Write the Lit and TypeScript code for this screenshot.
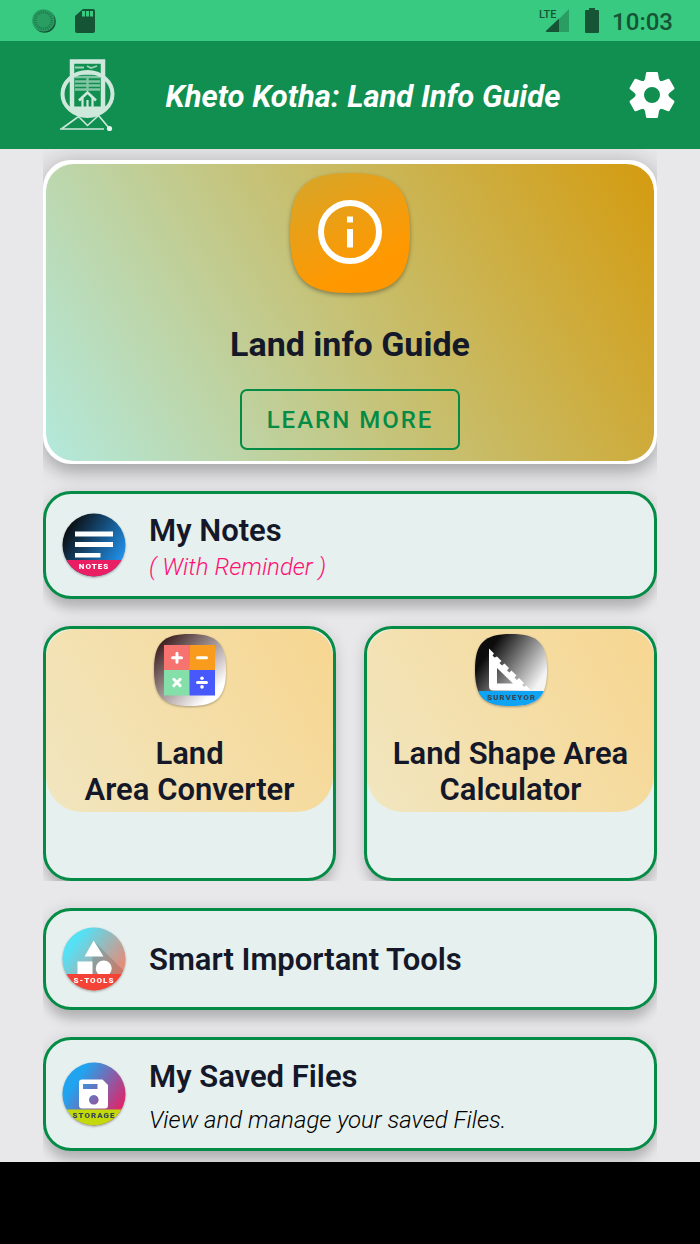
import { LitElement, html, css, svg } from "lit";
import { customElement } from "lit/decorators.js";

const SQUIRCLE = "M60 0C105 0 120 15 120 60S105 120 60 120 0 105 0 60 15 0 60 0Z";

const teeth = Array.from({ length: 24 }, (_, i) => i * 15);
const cogs = [0, 60, 120, 180, 240, 300];

const coinIcon = html`<svg class="coin" viewBox="0 0 24 24" aria-hidden="true">
  <circle cx="12.6" cy="12.6" r="11.2" fill="#165436" />
  <circle cx="11.4" cy="11.4" r="11.2" fill="#2a9d63" />
  ${teeth.map(
    (a) => svg`<path d="M11.4 1.4v3" stroke="#1b7c4b" stroke-width="1" transform="rotate(${a} 11.4 11.4)" />`
  )}
</svg>`;

const sdIcon = html`<svg class="sd" viewBox="0 0 20 24" aria-hidden="true">
  <path d="M8 0h10q2 0 2 2v20q0 2-2 2H2q-2 0-2-2V7Z" fill="#165436" />
  <path d="M7 2h3v5.500H7zM11 2h3v5.500h-3zM15 2h3v5.500h-3z" fill="#37ca80" />
</svg>`;

const signalIcon = html`<svg class="signal" viewBox="0 0 31 25" role="img" aria-label="LTE signal">
  <path d="M30 1v23H20V11Z" fill="#2a9d63" />
  <path d="M20 10.500V24H8q-2 0-.6-1.400Z" fill="#165436" />
  <text x="0" y="10" class="lte">LTE</text>
</svg>`;

const batteryIcon = html`<svg class="battery" viewBox="0 0 14 25" role="img" aria-label="Battery">
  <path d="M4 0h6v2h3q1 0 1 1v21q0 1-1 1H1q-1 0-1-1V3q0-1 1-1h3Z" fill="#165436" />
</svg>`;

const logoIcon = html`<svg class="logo" viewBox="0 0 60 76" aria-hidden="true">
  <g fill="none" stroke="#cfe8dc">
    <ellipse cx="29.500" cy="37" rx="25" ry="22" stroke-width="4" />
    <path d="M14 50V4.500h31V50" stroke-width="4.500" />
    <path d="M17 10.500h9M29 9l4 2 6-2M17 17h25" stroke-width="1.800" opacity=".75" />
    <path d="M17 20h25M17 24.500h25M17 28.500h25M17 32.500h25M29.500 20v14" stroke-width="2.400" opacity=".6" />
    <path d="M21 43.500l8.500-8 8.500 8" stroke-width="2.600" />
    <path d="M24.500 41v9M34.500 41v9M29.500 43v7" stroke-width="2.200" />
    <path d="M4 71.500 20.500 59.500 29.500 68.500 40.500 58.500 51 71" stroke-width="1.600" />
    <path d="M2 72h44" stroke-width="1.600" />
  </g>
  <path d="M11 49.500h37q-8 10-18.500 10T11 49.500Z" fill="#cfe8dc" />
  <circle cx="51.500" cy="71.500" r="2.600" fill="#e4f4ec" />
</svg>`;

const gearIcon = html`<svg class="gear" viewBox="-28 -28 56 56" aria-hidden="true">
  <circle r="12" fill="none" stroke="#fff" stroke-width="8" />
  ${cogs.map(
    (a) => svg`<path fill="#fff" transform="rotate(${a})"
      d="M-8.500-13.500-7-16-6-22Q-5.800-23-4.800-23H4.800Q5.800-23 6-22L7-16 8.500-13.500 5-11H-5Z" />`
  )}
</svg>`;

const infoIcon = html`<svg class="info" viewBox="0 0 120 120" aria-hidden="true">
  <defs>
    <linearGradient id="info-bg" x1="0.2" y1="0" x2="0.7" y2="1">
      <stop offset="0" stop-color="#d9a527" />
      <stop offset=".8" stop-color="#ff9800" />
    </linearGradient>
  </defs>
  <path d=${SQUIRCLE} fill="url(#info-bg)" />
  <circle cx="60" cy="59" r="29" fill="none" stroke="#fff" stroke-width="6" />
  <path d="M57 43.500h6v6h-6zM57 56h6v18.500h-6z" fill="#fff" />
</svg>`;

const converterIcon = html`<svg class="tile-icon" viewBox="0 0 72 72" aria-hidden="true">
  <defs>
    <linearGradient id="conv-bg" x1="0.1" y1="0.1" x2="0.9" y2="0.9">
      <stop offset="0" stop-color="#3c1d1e" />
      <stop offset=".9" stop-color="#ffffff" />
    </linearGradient>
  </defs>
  <path d=${SQUIRCLE} transform="scale(.6)" fill="url(#conv-bg)" />
  <path d="M10 11h25.500v25H10z" fill="#f6736f" />
  <path d="M35.500 11H61v25H35.500z" fill="#f99b1c" />
  <path d="M10 36h25.500v25.500H10z" fill="#84dfa9" />
  <path d="M35.500 36H61v25.500H35.500z" fill="#4859fb" />
  <g stroke="#fff" stroke-width="3" stroke-linecap="round" fill="none">
    <path d="M18.500 23.800h9M23 19.300v9M43.500 23.800h9M43.500 48.500h9" />
    <path d="M19.800 45.300l6.400 6.400M26.200 45.300l-6.400 6.400" />
  </g>
  <circle cx="48" cy="44.200" r="1.800" fill="#fff" />
  <circle cx="48" cy="52.900" r="1.800" fill="#fff" />
</svg>`;

const surveyorIcon = html`<svg class="tile-icon" viewBox="0 0 72 72" aria-hidden="true">
  <defs>
    <linearGradient id="surv-bg" x1="0.1" y1="0.2" x2="0.9" y2="0.75">
      <stop offset=".1" stop-color="#0c0c0c" />
      <stop offset=".95" stop-color="#f4f4f4" />
    </linearGradient>
    <clipPath id="surv-clip"><path d=${SQUIRCLE} transform="scale(.6)" /></clipPath>
  </defs>
  <g clip-path="url(#surv-clip)">
    <path d="M0 0h72v72H0z" fill="url(#surv-bg)" />
    <path d="M0 57h72v15H0z" fill="#0fa3f4" />
  </g>
  <path
    fill="#fff"
    fill-rule="evenodd"
    d="M14 14.500 19 19.500 17.500 21.500 19.500 23.500 22 22.500 26.500 27 24.500 29 27 31.500 29.500 29.500 34 34 32 36.500 34.500 38.500 36.500 36.500 41.500 41.500 39.500 43.500 42 46 44 44 49 49 47 51 49.500 53 51.500 51.500 56 56.500H18Q14 56.500 14 52ZM22 34V49.500H38Z"
  />
  <text x="36.500" y="66" text-anchor="middle" class="tag dark">SURVEYOR</text>
</svg>`;

const notesIcon = html`<svg class="round-icon" viewBox="0 0 64 64" aria-hidden="true">
  <defs>
    <linearGradient id="note-bg" x1="0.1" y1="0.15" x2="1" y2="0.7">
      <stop offset=".05" stop-color="#0b1116" />
      <stop offset="1" stop-color="#2196f3" />
    </linearGradient>
    <clipPath id="note-clip"><circle cx="32" cy="32" r="31.500" /></clipPath>
  </defs>
  <g clip-path="url(#note-clip)">
    <path d="M0 0h64v64H0z" fill="url(#note-bg)" />
    <path d="M0 47h64v17H0z" fill="#e91e63" />
  </g>
  <path d="M13 18.500h38v5H13zM13 29h38v5H13zM13 40h25.500v4.500H13z" fill="#fff" />
  <text x="32" y="55.500" text-anchor="middle" class="tag">NOTES</text>
</svg>`;

const toolsIcon = html`<svg class="round-icon" viewBox="0 0 64 64" aria-hidden="true">
  <defs>
    <linearGradient id="tool-bg" x1="0.15" y1="0.15" x2="0.95" y2="0.75">
      <stop offset=".1" stop-color="#55e0f5" />
      <stop offset="1" stop-color="#f4846c" />
    </linearGradient>
    <clipPath id="tool-clip"><circle cx="32" cy="32" r="31.500" /></clipPath>
  </defs>
  <g clip-path="url(#tool-clip)">
    <path d="M0 0h64v64H0z" fill="url(#tool-bg)" />
    <path d="M32 14 64 46v4H24l6-16Z" fill="#000" opacity=".12" />
    <path d="M0 47h64v17H0z" fill="#f44336" />
  </g>
  <path d="M31.700 13.500 41.500 29.500h-19ZM15.500 34.500h15V47h-15zM36 47a8 8 0 1 1 11.500 0z" fill="#fff" />
  <text x="32" y="55.500" text-anchor="middle" class="tag">S-TOOLS</text>
</svg>`;

const storageIcon = html`<svg class="round-icon" viewBox="0 0 64 64" aria-hidden="true">
  <defs>
    <linearGradient id="store-bg" x1="0.1" y1="0.2" x2="0.95" y2="0.75">
      <stop offset=".15" stop-color="#20a4f0" />
      <stop offset="1" stop-color="#e91e63" />
    </linearGradient>
    <clipPath id="store-clip"><circle cx="32" cy="32" r="31.500" /></clipPath>
  </defs>
  <g clip-path="url(#store-clip)">
    <path d="M0 0h64v64H0z" fill="url(#store-bg)" />
    <path d="M0 47.500h64V64H0z" fill="#c3d90c" />
  </g>
  <path
    fill="#fff"
    fill-rule="evenodd"
    d="M20 17.500H40.500L46 23V43.500Q46 46.500 43 46.500H20Q17 46.500 17 43.500V20.500Q17 17.500 20 17.500ZM21 22v5h14.500v-5ZM31.800 33a4.800 4.800 0 1 0 .01 0Z"
  />
  <text x="32" y="56" text-anchor="middle" class="tag dark">STORAGE</text>
</svg>`;

@customElement("app-root")
export class AppRoot extends LitElement {
  static styles = css`
    :host {
      display: flex;
      flex-direction: column;
      min-height: 100vh;
      background: #e8e8ea;
      color: #141829;
      font-family: Roboto, "Noto Sans", sans-serif;
    }
    *,
    *::before {
      box-sizing: border-box;
    }
    svg {
      display: block;
      flex: none;
      overflow: visible;
    }
    button {
      margin: 0;
      font: inherit;
      color: inherit;
      cursor: pointer;
    }
    h1,
    h2,
    p {
      margin: 0;
    }

    .status {
      display: flex;
      align-items: center;
      height: 41px;
      padding: 0 27px 0 32px;
      background: #37ca80;
      color: #165436;
    }
    .coin {
      width: 24px;
      height: 24px;
      margin-right: 19px;
    }
    .sd {
      width: 20px;
      height: 24px;
    }
    .signal {
      width: 31px;
      height: 25px;
      margin-left: auto;
      margin-right: 15px;
    }
    .lte {
      font-weight: 500;
      font-size: 11px;
      fill: #165436;
    }
    .battery {
      width: 14px;
      height: 25px;
      margin-right: 13px;
    }
    .clock {
      padding-top: 2px;
      font-size: 24px;
      line-height: 28px;
      font-weight: 500;
    }

    .header {
      display: flex;
      align-items: center;
      height: 108px;
      padding: 0 20px 0 58px;
      background: #108f51;
      color: #fff;
    }
    .logo {
      width: 60px;
      height: 76px;
    }
    .title {
      flex: 1;
      padding: 3px 16px 0 0;
      text-align: center;
      font-size: 31px;
      line-height: 36px;
      font-weight: 700;
      font-style: italic;
    }
    .settings {
      border: 0;
      padding: 0;
      background: none;
    }
    .gear {
      width: 56px;
      height: 56px;
    }

    .content {
      flex: 1;
      margin: 0 43px;
      padding: 11px 0;
      display: flex;
      flex-direction: column;
      gap: 27px;
      overflow: hidden;
    }
    .card {
      border: 3px solid #048c46;
      border-radius: 28px;
      background: #e6f0ee;
      box-shadow: 0 14px 12px -4px rgba(0, 0, 0, 0.17), 0 2px 16px rgba(0, 0, 0, 0.13);
      overflow: hidden;
    }
    .hero {
      border-color: #fff;
      background: #fff;
      box-shadow: 0 14px 14px -4px rgba(0, 0, 0, 0.12), 0 2px 24px rgba(0, 0, 0, 0.26);
    }
    .hero-body {
      display: flex;
      flex-direction: column;
      align-items: center;
      padding: 9px 16px 11px;
      border-top: 1px solid #fff;
      border-radius: 28px;
      background: linear-gradient(60deg, #b3e9dc 0%, #c6c277 48%, #d49b0f 100%);
    }
    .info {
      width: 120px;
      height: 120px;
      filter: drop-shadow(0 2px 2px rgba(0, 0, 0, 0.35));
    }
    .hero-title {
      margin: 29px 0 23px;
      font-size: 34px;
      line-height: 44px;
      font-weight: 700;
    }
    .learn {
      height: 61px;
      padding: 0 25px;
      border: 2px solid #048c46;
      border-radius: 7px;
      background: none;
      color: #048c46;
      font-size: 24px;
      font-weight: 500;
      letter-spacing: 2px;
    }

    .row {
      display: flex;
      align-items: center;
      gap: 23px;
      padding: 0 16px;
      text-align: left;
    }
    .notes {
      min-height: 108px;
    }
    .tools {
      min-height: 102px;
    }
    .files {
      min-height: 114px;
    }
    .round-icon {
      width: 64px;
      height: 64px;
      filter: drop-shadow(0 1px 1px rgba(0, 0, 0, 0.3));
    }
    .labels {
      display: flex;
      flex-direction: column;
      padding-top: 2px;
    }
    .notes .labels,
    .files .labels {
      padding-top: 8px;
    }
    .files .labels {
      gap: 7px;
    }
    .name {
      font-size: 31px;
      line-height: 36px;
      font-weight: 600;
    }
    .sub {
      font-size: 24px;
      line-height: 36px;
      font-weight: 300;
      font-style: italic;
      color: #000;
    }
    .pink {
      color: #ff1073;
    }

    .pair {
      display: grid;
      grid-template-columns: 1fr 1fr;
      gap: 28px;
      clip-path: inset(-12px 0 0 0);
    }
    .tile {
      display: flex;
      flex-direction: column;
      justify-content: flex-start;
      min-height: 255px;
      padding: 0;
    }
    .tile-body {
      display: flex;
      flex-direction: column;
      align-items: center;
      gap: 30px;
      width: 100%;
      padding: 5px 8px 4px;
      border-radius: 28px 28px 36px 36px;
      background: linear-gradient(60deg, #f1e6c0, #f7d690);
    }
    .tile-icon {
      width: 72px;
      height: 72px;
      filter: drop-shadow(0 1px 1px rgba(0, 0, 0, 0.3));
    }
    .tag {
      font-size: 8px;
      font-weight: 900;
      letter-spacing: 1px;
      fill: #fff;
    }
    .dark {
      fill: #37474f;
    }
    .navbar {
      height: 82px;
      background: #000;
    }
  `;

  render() {
    return html`
      <div class="status">
        ${coinIcon}${sdIcon}${signalIcon}${batteryIcon}
        <time class="clock">10:03</time>
      </div>
      <header class="header">
        ${logoIcon}
        <h1 class="title">Kheto Kotha: Land Info Guide</h1>
        <button class="settings" aria-label="Settings">${gearIcon}</button>
      </header>
      <main class="content">
        <section class="card hero">
          <div class="hero-body">
            ${infoIcon}
            <h2 class="hero-title">Land info Guide</h2>
            <button class="learn">LEARN MORE</button>
          </div>
        </section>
        <button class="card row notes">
          ${notesIcon}
          <span class="labels">
            <span class="name">My Notes</span>
            <span class="sub pink">( With Reminder )</span>
          </span>
        </button>
        <div class="pair">
          <button class="card tile">
            <span class="tile-body">
              ${converterIcon}
              <span class="name">Land<br />Area Converter</span>
            </span>
          </button>
          <button class="card tile">
            <span class="tile-body">
              ${surveyorIcon}
              <span class="name">Land Shape Area<br />Calculator</span>
            </span>
          </button>
        </div>
        <button class="card row tools">
          ${toolsIcon}
          <span class="labels"><span class="name">Smart Important Tools</span></span>
        </button>
        <button class="card row files">
          ${storageIcon}
          <span class="labels">
            <span class="name">My Saved Files</span>
            <span class="sub">View and manage your saved Files.</span>
          </span>
        </button>
      </main>
      <footer class="navbar"></footer>
    `;
  }
}
